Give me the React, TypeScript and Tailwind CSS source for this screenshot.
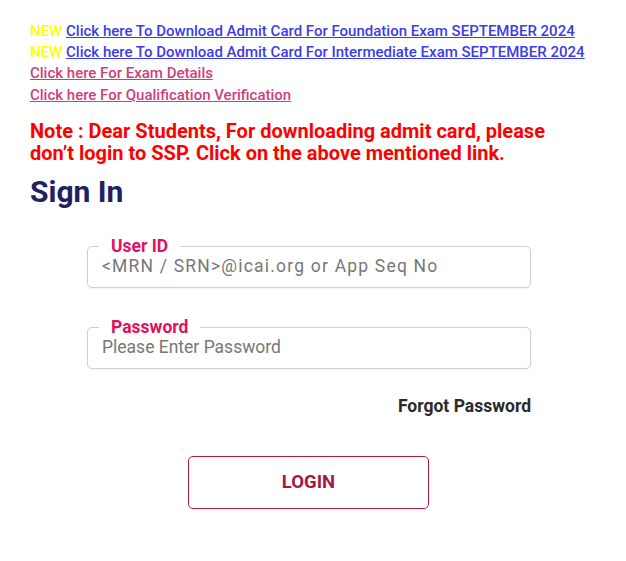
import React from 'react';

const font = { fontFamily: 'Roboto, "Noto Sans", sans-serif' };

const Field: React.FC<{ label: string; placeholder: string; type?: string; wide?: boolean }> = ({
  label,
  placeholder,
  type = 'text',
  wide,
}) => (
  <fieldset className="border border-[#cfcfcf] rounded-[5px] pl-[14px] pr-3 pb-[8px] pt-0 shadow-[0_1px_2px_rgba(0,0,0,0.06)]">
    <legend className="ml-[-3px] px-[12px] text-[17.5px] leading-[18px] font-bold text-[#e0115f]">{label}</legend>
    <input
      type={type}
      placeholder={placeholder}
      className={
        'w-full outline-none text-[17.5px] leading-[22px] text-[#666] placeholder:text-[#777] bg-transparent ' +
        (wide ? 'tracking-[1.2px]' : '')
      }
    />
  </fieldset>
);

export default function App() {
  return (
    <div className="w-[626px] min-h-[561px] bg-white px-[30px] pt-[20px]" style={font}>
      <div className="text-[15px] font-medium leading-[21px]">
        <div className="mt-[1px]">
          <span className="text-[#ffff00]">NEW </span>
          <a href="#" className="text-[#3b3bf0] underline">
            Click here To Download Admit Card For Foundation Exam SEPTEMBER 2024
          </a>
        </div>
        <div>
          <span className="text-[#ffff00]">NEW </span>
          <a href="#" className="text-[#3b3bf0] underline">
            Click here To Download Admit Card For Intermediate Exam SEPTEMBER 2024
          </a>
        </div>
        <div>
          <a href="#" className="text-[#d03d7e] underline">
            Click here For Exam Details
          </a>
        </div>
        <div className="mt-[1px]">
          <a href="#" className="text-[#d03d7e] underline">
            Click here For Qualification Verification
          </a>
        </div>
      </div>

      <p className="mt-[14px] text-[20px] leading-[22px] font-bold text-[#ff0000] w-[530px]">
        Note : Dear Students, For downloading admit card, please don’t login to SSP. Click on the above mentioned link.
      </p>

      <h1 className="mt-[10px] text-[30px] leading-[36px] font-bold text-[#1f2160]">Sign In</h1>

      <div className="ml-[57px] w-[444px] mt-[27px] flex flex-col">
        <Field label="User ID" placeholder="<MRN / SRN>@icai.org or App Seq No" wide />
        <div className="mt-[30px]">
          <Field label="Password" placeholder="Please Enter Password" type="password" />
        </div>
        <div className="flex justify-end mt-[27px]">
          <a href="#" className="text-[17.5px] font-bold text-[#2a2a2a] leading-[20px]">
            Forgot Password
          </a>
        </div>
      </div>

      <div className="ml-[158px] mt-[40px]">
        <button className="w-[241px] h-[53px] border border-[#b8173f] rounded-[5px] text-[18.5px] font-bold text-[#a8173f]">
          LOGIN
        </button>
      </div>
    </div>
  );
}
